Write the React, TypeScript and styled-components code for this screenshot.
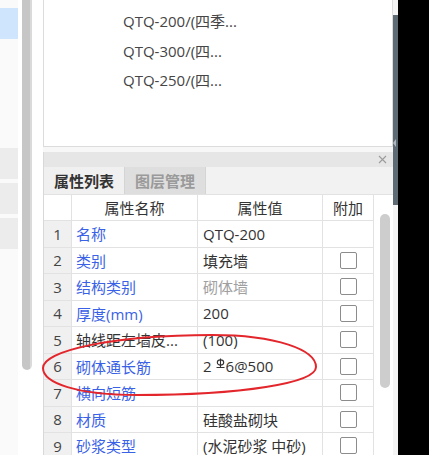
import React from 'react';
import styled, {createGlobalStyle} from 'styled-components';

const GlobalStyle = createGlobalStyle`
    html, body {
        margin: 0;
        padding: 0;
        background: #000;
    }
    body {
        font-family: "Open Sans", "Noto Sans CJK SC", sans-serif;
        font-size: 15px;
        color: #333;
    }`;

interface PropRow {
    name: string;
    value: React.ReactNode;
    plain?: boolean;
    muted?: boolean;
    check: boolean;
}

const Screen = styled.div`
    display: flex;
    width: 429px;
    height: 455px;
    overflow: hidden;
    background: #000;`;

const LeftPane = styled.div`
    display: flex;
    width: 43px;
    flex-shrink: 0;
    background: #fff;`;

const NavStrip = styled.div`
    display: flex;
    flex-direction: column;
    width: 18px;
    padding-top: 8px;
    background: #fafafa;`;

const NavItem = styled.div<{ $active?: boolean, $gap?: number }>`
    height: 31px;
    margin-top: ${p => p.$gap || 0}px;
    background: ${p => p.$active ? '#cfe5fd' : '#ececec'};`;

const LeftScroll = styled.div`
    width: 10px;
    height: 370px;
    margin-left: 4px;
    border-radius: 0 0 5px 5px;
    background: linear-gradient(to right, #c6c6c6 80%, #dadada 80%);`;

const Main = styled.div`
    display: flex;
    flex-direction: column;
    width: 350px;
    flex-shrink: 0;
    gap: 5px;
    background: #f7f7f7;`;

const TopBox = styled.div`
    box-sizing: border-box;
    height: 147px;
    padding: 11px 0 0 79px;
    display: flex;
    flex-direction: column;
    gap: 8px;
    background: #fff;
    border: 1px solid #dcdcdc;
    border-top: none;`;

const ListItem = styled.div`
    height: 21.5px;
    line-height: 21.5px;
    color: #454545;
    font-size: 15px;`;

const PropPanel = styled.div`
    display: flex;
    flex-direction: column;
    flex: 1;
    min-height: 0;
    border-left: 1px solid #d8d8d8;`;

const PanelHead = styled.div`
    height: 15px;
    display: flex;
    justify-content: flex-end;
    align-items: center;
    padding-right: 6px;
    background: #e6e6e6;`;

const TabBar = styled.div`
    display: flex;
    height: 27px;
    background: #f2f2f2;
    border-bottom: 1px solid #e2e2e2;`;

const Tab = styled.div<{ $active?: boolean }>`
    box-sizing: border-box;
    width: 81px;
    display: flex;
    align-items: center;
    justify-content: center;
    font-weight: 700;
    font-size: 15px;
    color: ${p => p.$active ? '#333' : '#9a9a9a'};
    background: ${p => p.$active ? '#f0f0f0' : '#dedede'};
    border-right: 1px solid #d4d4d4;`;

const TableArea = styled.div`
    position: relative;
    display: flex;
    flex: 1;
    min-height: 0;
    background: #fff;`;

const Grid = styled.div`
    display: grid;
    grid-template-columns: 28px 126px 125px 51px;
    grid-template-rows: 26px;
    grid-auto-rows: 26.5px;
    align-content: start;`;

const Cell = styled.div<{ $kind?: 'num' | 'head' | 'name' | 'value' | 'check', $tone?: string }>`
    box-sizing: border-box;
    display: flex;
    align-items: center;
    justify-content: ${p => (p.$kind === 'name' || p.$kind === 'value') ? 'flex-start' : 'center'};
    padding-left: ${p => p.$kind === 'name' ? 4 : p.$kind === 'value' ? 5 : 0}px;
    border-right: 1px solid #e2e2e2;
    border-bottom: 1px solid #e2e2e2;
    white-space: nowrap;
    overflow: hidden;
    font-size: 15px;
    color: ${p => p.$tone || '#333'};
    background: ${p => p.$kind === 'num' ? '#f0f0f0' : '#fff'};`;

const CheckBox = styled.span`
    box-sizing: border-box;
    width: 17px;
    height: 17px;
    border: 1px solid #8c8c8c;
    border-radius: 2px;
    background: #fff;`;

const ScrollTrack = styled.div`
    flex: 1;
    padding: 19px 0 0 6px;`;

const ScrollThumb = styled.div`
    width: 10px;
    height: 174px;
    border-radius: 5px;
    background: #cdcdcd;`;

const Splitter = styled.div`
    width: 5px;
    flex-shrink: 0;
    padding-top: 15px;
    background: #f4f4f4;`;

const SplitBar = styled.div`
    height: 190px;
    display: flex;
    align-items: center;
    background: #5e6a74;`;

const Notch = styled.span`
    width: 0;
    height: 0;
    margin-top: 66px;
    border-top: 4px solid transparent;
    border-bottom: 4px solid transparent;
    border-right: 3px solid #b0b8bf;`;

const Annotation = styled.svg`
    position: absolute;
    left: -2px;
    top: 130px;
    pointer-events: none;`;

const Rebar = styled.svg`
    margin: 0 1px 5px 4px;`;

const RebarMark = () => (
    <Rebar width="9" height="11" viewBox="0 0 9 11">
        <ellipse cx="4.5" cy="4.5" rx="3.2" ry="2.6" fill="none" stroke="#333" strokeWidth="1.1" />
        <path d="M4.5 0.5 V9.5 M0.5 9.5 H8.5" stroke="#333" strokeWidth="1.1" fill="none" />
    </Rebar>
);

const rows: PropRow[] = [
    { name: '名称', value: 'QTQ-200', check: false },
    { name: '类别', value: '填充墙', check: true },
    { name: '结构类别', value: '砌体墙', muted: true, check: true },
    { name: '厚度(mm)', value: '200', check: true },
    { name: '轴线距左墙皮...', value: '(100)', plain: true, check: true },
    { name: '砌体通长筋', value: <>2<RebarMark />6@500</>, check: true },
    { name: '横向短筋', value: '', check: true },
    { name: '材质', value: '硅酸盐砌块', check: true },
    { name: '砂浆类型', value: '(水泥砂浆 中砂)', check: true },
];

const App = () => (
    <Screen>
        <GlobalStyle />
        <LeftPane>
            <NavStrip>
                <NavItem $active />
                <NavItem $gap={109} />
                <NavItem $gap={4} />
                <NavItem $gap={4} />
            </NavStrip>
            <LeftScroll />
        </LeftPane>

        <Main>
            <TopBox>
                <ListItem>QTQ-200/(四季...</ListItem>
                <ListItem>QTQ-300/(四...</ListItem>
                <ListItem>QTQ-250/(四...</ListItem>
            </TopBox>

            <PropPanel>
                <PanelHead>
                    <svg width="9" height="9" viewBox="0 0 9 9">
                        <path d="M1 1 L8 8 M8 1 L1 8" stroke="#9c9c9c" strokeWidth="1.1" />
                    </svg>
                </PanelHead>
                <TabBar>
                    <Tab $active>属性列表</Tab>
                    <Tab>图层管理</Tab>
                </TabBar>
                <TableArea>
                    <Grid>
                        <Cell $kind="head" />
                        <Cell $kind="head">属性名称</Cell>
                        <Cell $kind="head">属性值</Cell>
                        <Cell $kind="head">附加</Cell>
                        {rows.map((r, i) => (
                            <React.Fragment key={r.name}>
                                <Cell $kind="num" $tone="#444">{i + 1}</Cell>
                                <Cell $kind="name" $tone={r.plain ? '#333' : '#3a62e6'}>{r.name}</Cell>
                                <Cell $kind="value" $tone={r.muted ? '#a0a0a0' : '#333'}>{r.value}</Cell>
                                <Cell $kind="check">{r.check && <CheckBox />}</Cell>
                            </React.Fragment>
                        ))}
                    </Grid>
                    <ScrollTrack>
                        <ScrollThumb />
                    </ScrollTrack>
                    <Annotation width="330" height="80" viewBox="0 0 330 80">
                        <path
                            d="M1 43 C1 26, 70 10, 170 10 C235 10, 274 25, 274 42 C274 58, 200 70, 95 70 C35 70, 1 58, 1 43 Z"
                            fill="none" stroke="#e3262b" strokeWidth="2" />
                    </Annotation>
                </TableArea>
            </PropPanel>
        </Main>

        <Splitter>
            <SplitBar>
                <Notch />
            </SplitBar>
        </Splitter>
    </Screen>
);

export default App;
